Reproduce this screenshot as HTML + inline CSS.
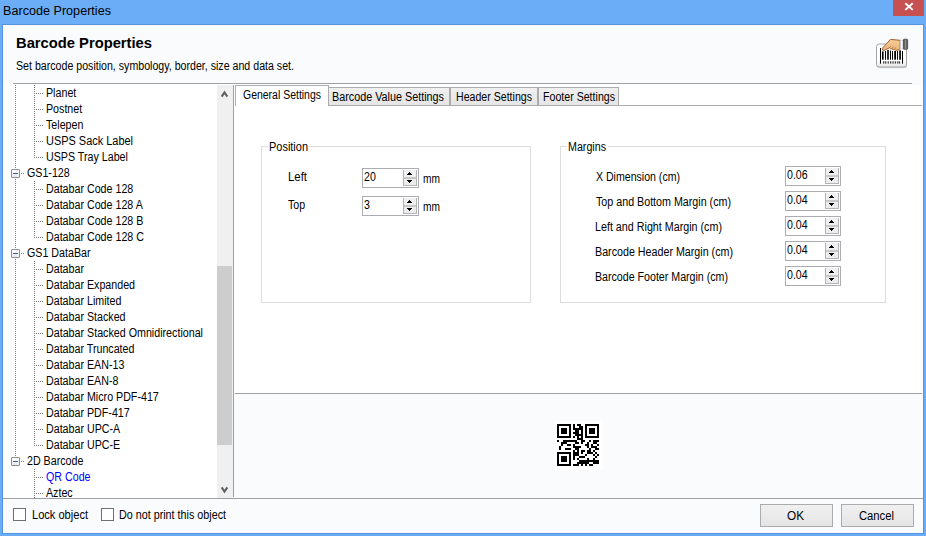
<!DOCTYPE html>
<html><head><meta charset="utf-8"><style>
*{margin:0;padding:0;box-sizing:content-box}
html,body{width:926px;height:536px;overflow:hidden;position:relative;font-family:"Liberation Sans",sans-serif}
.t{position:absolute;white-space:nowrap;font-family:"Liberation Sans",sans-serif;transform-origin:0 0}
.ebox{position:absolute;width:7px;height:7px;border:1px solid #8e8f8f;border-radius:1px;background:linear-gradient(#fff,#e8e8e8)}
.ebox i{position:absolute;left:1px;top:3px;width:5px;height:1px;background:#3c5aa0}
.num{position:absolute;border:1px solid #abadb3;background:#fff}
.sb{position:absolute;width:14px;border:0;background:linear-gradient(#f2f2f2,#e3e3e3);box-shadow:inset 0 0 0 1px #d9d9d9}
.cb{position:absolute;width:11px;height:11px;border:1px solid #707070;background:#fff}
.btn{position:absolute;border:1px solid #acacac;background:linear-gradient(#f0f0f0,#e5e5e5)}
</style></head>
<body>
<div style="position:absolute;left:0px;top:0px;width:926px;height:536px;background:#6badf6"></div>
<div class="t" style="left:3px;top:4px;font-size:12.5px;font-weight:400;color:#000;line-height:15px;transform:scaleX(1.0092);">Barcode Properties</div>
<div style="position:absolute;left:893px;top:0px;width:31px;height:16px;background:#c75050;"></div>
<svg style="position:absolute;left:904px;top:2px" width="10" height="10" viewBox="0 0 10 10"><path d="M1.3 1.2 L8.7 7.9 M8.7 1.2 L1.3 7.9" stroke="#fff" stroke-width="1.9"/></svg>
<div style="position:absolute;left:2px;top:24px;width:920px;height:508px;background:#fafbfd;border:1px solid #5593dc"></div>
<div class="t" style="left:16px;top:35px;font-size:14px;font-weight:700;color:#000;line-height:16px;transform:scaleX(1.0529);">Barcode Properties</div>
<div class="t" style="left:16px;top:59px;font-size:12px;font-weight:400;color:#000;line-height:14px;transform:scaleX(0.8854);">Set barcode position, symbology, border, size and data set.</div>
<div style="position:absolute;left:13px;top:83px;width:899px;height:1px;background:#a0a0a0"></div>
<div style="position:absolute;left:3px;top:84px;width:214px;height:414px;background:#fff"></div>
<div style="position:absolute;left:3px;top:84px;width:10px;height:1px;background:#fafbfd"></div>
<div style="position:absolute;left:217px;top:84px;width:16px;height:1px;background:#fff"></div>
<svg style="position:absolute;left:3px;top:84px" width="214" height="414" shape-rendering="crispEdges"><rect x="12" y="1" width="1" height="1" fill="#7c7c7c"/><rect x="12" y="3" width="1" height="1" fill="#7c7c7c"/><rect x="12" y="5" width="1" height="1" fill="#7c7c7c"/><rect x="12" y="7" width="1" height="1" fill="#7c7c7c"/><rect x="12" y="9" width="1" height="1" fill="#7c7c7c"/><rect x="12" y="11" width="1" height="1" fill="#7c7c7c"/><rect x="12" y="13" width="1" height="1" fill="#7c7c7c"/><rect x="12" y="15" width="1" height="1" fill="#7c7c7c"/><rect x="12" y="17" width="1" height="1" fill="#7c7c7c"/><rect x="12" y="19" width="1" height="1" fill="#7c7c7c"/><rect x="12" y="21" width="1" height="1" fill="#7c7c7c"/><rect x="12" y="23" width="1" height="1" fill="#7c7c7c"/><rect x="12" y="25" width="1" height="1" fill="#7c7c7c"/><rect x="12" y="27" width="1" height="1" fill="#7c7c7c"/><rect x="12" y="29" width="1" height="1" fill="#7c7c7c"/><rect x="12" y="31" width="1" height="1" fill="#7c7c7c"/><rect x="12" y="33" width="1" height="1" fill="#7c7c7c"/><rect x="12" y="35" width="1" height="1" fill="#7c7c7c"/><rect x="12" y="37" width="1" height="1" fill="#7c7c7c"/><rect x="12" y="39" width="1" height="1" fill="#7c7c7c"/><rect x="12" y="41" width="1" height="1" fill="#7c7c7c"/><rect x="12" y="43" width="1" height="1" fill="#7c7c7c"/><rect x="12" y="45" width="1" height="1" fill="#7c7c7c"/><rect x="12" y="47" width="1" height="1" fill="#7c7c7c"/><rect x="12" y="49" width="1" height="1" fill="#7c7c7c"/><rect x="12" y="51" width="1" height="1" fill="#7c7c7c"/><rect x="12" y="53" width="1" height="1" fill="#7c7c7c"/><rect x="12" y="55" width="1" height="1" fill="#7c7c7c"/><rect x="12" y="57" width="1" height="1" fill="#7c7c7c"/><rect x="12" y="59" width="1" height="1" fill="#7c7c7c"/><rect x="12" y="61" width="1" height="1" fill="#7c7c7c"/><rect x="12" y="63" width="1" height="1" fill="#7c7c7c"/><rect x="12" y="65" width="1" height="1" fill="#7c7c7c"/><rect x="12" y="67" width="1" height="1" fill="#7c7c7c"/><rect x="12" y="69" width="1" height="1" fill="#7c7c7c"/><rect x="12" y="71" width="1" height="1" fill="#7c7c7c"/><rect x="12" y="73" width="1" height="1" fill="#7c7c7c"/><rect x="12" y="75" width="1" height="1" fill="#7c7c7c"/><rect x="12" y="77" width="1" height="1" fill="#7c7c7c"/><rect x="12" y="79" width="1" height="1" fill="#7c7c7c"/><rect x="12" y="81" width="1" height="1" fill="#7c7c7c"/><rect x="12" y="83" width="1" height="1" fill="#7c7c7c"/><rect x="12" y="95" width="1" height="1" fill="#7c7c7c"/><rect x="12" y="97" width="1" height="1" fill="#7c7c7c"/><rect x="12" y="99" width="1" height="1" fill="#7c7c7c"/><rect x="12" y="101" width="1" height="1" fill="#7c7c7c"/><rect x="12" y="103" width="1" height="1" fill="#7c7c7c"/><rect x="12" y="105" width="1" height="1" fill="#7c7c7c"/><rect x="12" y="107" width="1" height="1" fill="#7c7c7c"/><rect x="12" y="109" width="1" height="1" fill="#7c7c7c"/><rect x="12" y="111" width="1" height="1" fill="#7c7c7c"/><rect x="12" y="113" width="1" height="1" fill="#7c7c7c"/><rect x="12" y="115" width="1" height="1" fill="#7c7c7c"/><rect x="12" y="117" width="1" height="1" fill="#7c7c7c"/><rect x="12" y="119" width="1" height="1" fill="#7c7c7c"/><rect x="12" y="121" width="1" height="1" fill="#7c7c7c"/><rect x="12" y="123" width="1" height="1" fill="#7c7c7c"/><rect x="12" y="125" width="1" height="1" fill="#7c7c7c"/><rect x="12" y="127" width="1" height="1" fill="#7c7c7c"/><rect x="12" y="129" width="1" height="1" fill="#7c7c7c"/><rect x="12" y="131" width="1" height="1" fill="#7c7c7c"/><rect x="12" y="133" width="1" height="1" fill="#7c7c7c"/><rect x="12" y="135" width="1" height="1" fill="#7c7c7c"/><rect x="12" y="137" width="1" height="1" fill="#7c7c7c"/><rect x="12" y="139" width="1" height="1" fill="#7c7c7c"/><rect x="12" y="141" width="1" height="1" fill="#7c7c7c"/><rect x="12" y="143" width="1" height="1" fill="#7c7c7c"/><rect x="12" y="145" width="1" height="1" fill="#7c7c7c"/><rect x="12" y="147" width="1" height="1" fill="#7c7c7c"/><rect x="12" y="149" width="1" height="1" fill="#7c7c7c"/><rect x="12" y="151" width="1" height="1" fill="#7c7c7c"/><rect x="12" y="153" width="1" height="1" fill="#7c7c7c"/><rect x="12" y="155" width="1" height="1" fill="#7c7c7c"/><rect x="12" y="157" width="1" height="1" fill="#7c7c7c"/><rect x="12" y="159" width="1" height="1" fill="#7c7c7c"/><rect x="12" y="161" width="1" height="1" fill="#7c7c7c"/><rect x="12" y="163" width="1" height="1" fill="#7c7c7c"/><rect x="12" y="175" width="1" height="1" fill="#7c7c7c"/><rect x="12" y="177" width="1" height="1" fill="#7c7c7c"/><rect x="12" y="179" width="1" height="1" fill="#7c7c7c"/><rect x="12" y="181" width="1" height="1" fill="#7c7c7c"/><rect x="12" y="183" width="1" height="1" fill="#7c7c7c"/><rect x="12" y="185" width="1" height="1" fill="#7c7c7c"/><rect x="12" y="187" width="1" height="1" fill="#7c7c7c"/><rect x="12" y="189" width="1" height="1" fill="#7c7c7c"/><rect x="12" y="191" width="1" height="1" fill="#7c7c7c"/><rect x="12" y="193" width="1" height="1" fill="#7c7c7c"/><rect x="12" y="195" width="1" height="1" fill="#7c7c7c"/><rect x="12" y="197" width="1" height="1" fill="#7c7c7c"/><rect x="12" y="199" width="1" height="1" fill="#7c7c7c"/><rect x="12" y="201" width="1" height="1" fill="#7c7c7c"/><rect x="12" y="203" width="1" height="1" fill="#7c7c7c"/><rect x="12" y="205" width="1" height="1" fill="#7c7c7c"/><rect x="12" y="207" width="1" height="1" fill="#7c7c7c"/><rect x="12" y="209" width="1" height="1" fill="#7c7c7c"/><rect x="12" y="211" width="1" height="1" fill="#7c7c7c"/><rect x="12" y="213" width="1" height="1" fill="#7c7c7c"/><rect x="12" y="215" width="1" height="1" fill="#7c7c7c"/><rect x="12" y="217" width="1" height="1" fill="#7c7c7c"/><rect x="12" y="219" width="1" height="1" fill="#7c7c7c"/><rect x="12" y="221" width="1" height="1" fill="#7c7c7c"/><rect x="12" y="223" width="1" height="1" fill="#7c7c7c"/><rect x="12" y="225" width="1" height="1" fill="#7c7c7c"/><rect x="12" y="227" width="1" height="1" fill="#7c7c7c"/><rect x="12" y="229" width="1" height="1" fill="#7c7c7c"/><rect x="12" y="231" width="1" height="1" fill="#7c7c7c"/><rect x="12" y="233" width="1" height="1" fill="#7c7c7c"/><rect x="12" y="235" width="1" height="1" fill="#7c7c7c"/><rect x="12" y="237" width="1" height="1" fill="#7c7c7c"/><rect x="12" y="239" width="1" height="1" fill="#7c7c7c"/><rect x="12" y="241" width="1" height="1" fill="#7c7c7c"/><rect x="12" y="243" width="1" height="1" fill="#7c7c7c"/><rect x="12" y="245" width="1" height="1" fill="#7c7c7c"/><rect x="12" y="247" width="1" height="1" fill="#7c7c7c"/><rect x="12" y="249" width="1" height="1" fill="#7c7c7c"/><rect x="12" y="251" width="1" height="1" fill="#7c7c7c"/><rect x="12" y="253" width="1" height="1" fill="#7c7c7c"/><rect x="12" y="255" width="1" height="1" fill="#7c7c7c"/><rect x="12" y="257" width="1" height="1" fill="#7c7c7c"/><rect x="12" y="259" width="1" height="1" fill="#7c7c7c"/><rect x="12" y="261" width="1" height="1" fill="#7c7c7c"/><rect x="12" y="263" width="1" height="1" fill="#7c7c7c"/><rect x="12" y="265" width="1" height="1" fill="#7c7c7c"/><rect x="12" y="267" width="1" height="1" fill="#7c7c7c"/><rect x="12" y="269" width="1" height="1" fill="#7c7c7c"/><rect x="12" y="271" width="1" height="1" fill="#7c7c7c"/><rect x="12" y="273" width="1" height="1" fill="#7c7c7c"/><rect x="12" y="275" width="1" height="1" fill="#7c7c7c"/><rect x="12" y="277" width="1" height="1" fill="#7c7c7c"/><rect x="12" y="279" width="1" height="1" fill="#7c7c7c"/><rect x="12" y="281" width="1" height="1" fill="#7c7c7c"/><rect x="12" y="283" width="1" height="1" fill="#7c7c7c"/><rect x="12" y="285" width="1" height="1" fill="#7c7c7c"/><rect x="12" y="287" width="1" height="1" fill="#7c7c7c"/><rect x="12" y="289" width="1" height="1" fill="#7c7c7c"/><rect x="12" y="291" width="1" height="1" fill="#7c7c7c"/><rect x="12" y="293" width="1" height="1" fill="#7c7c7c"/><rect x="12" y="295" width="1" height="1" fill="#7c7c7c"/><rect x="12" y="297" width="1" height="1" fill="#7c7c7c"/><rect x="12" y="299" width="1" height="1" fill="#7c7c7c"/><rect x="12" y="301" width="1" height="1" fill="#7c7c7c"/><rect x="12" y="303" width="1" height="1" fill="#7c7c7c"/><rect x="12" y="305" width="1" height="1" fill="#7c7c7c"/><rect x="12" y="307" width="1" height="1" fill="#7c7c7c"/><rect x="12" y="309" width="1" height="1" fill="#7c7c7c"/><rect x="12" y="311" width="1" height="1" fill="#7c7c7c"/><rect x="12" y="313" width="1" height="1" fill="#7c7c7c"/><rect x="12" y="315" width="1" height="1" fill="#7c7c7c"/><rect x="12" y="317" width="1" height="1" fill="#7c7c7c"/><rect x="12" y="319" width="1" height="1" fill="#7c7c7c"/><rect x="12" y="321" width="1" height="1" fill="#7c7c7c"/><rect x="12" y="323" width="1" height="1" fill="#7c7c7c"/><rect x="12" y="325" width="1" height="1" fill="#7c7c7c"/><rect x="12" y="327" width="1" height="1" fill="#7c7c7c"/><rect x="12" y="329" width="1" height="1" fill="#7c7c7c"/><rect x="12" y="331" width="1" height="1" fill="#7c7c7c"/><rect x="12" y="333" width="1" height="1" fill="#7c7c7c"/><rect x="12" y="335" width="1" height="1" fill="#7c7c7c"/><rect x="12" y="337" width="1" height="1" fill="#7c7c7c"/><rect x="12" y="339" width="1" height="1" fill="#7c7c7c"/><rect x="12" y="341" width="1" height="1" fill="#7c7c7c"/><rect x="12" y="343" width="1" height="1" fill="#7c7c7c"/><rect x="12" y="345" width="1" height="1" fill="#7c7c7c"/><rect x="12" y="347" width="1" height="1" fill="#7c7c7c"/><rect x="12" y="349" width="1" height="1" fill="#7c7c7c"/><rect x="12" y="351" width="1" height="1" fill="#7c7c7c"/><rect x="12" y="353" width="1" height="1" fill="#7c7c7c"/><rect x="12" y="355" width="1" height="1" fill="#7c7c7c"/><rect x="12" y="357" width="1" height="1" fill="#7c7c7c"/><rect x="12" y="359" width="1" height="1" fill="#7c7c7c"/><rect x="12" y="361" width="1" height="1" fill="#7c7c7c"/><rect x="12" y="363" width="1" height="1" fill="#7c7c7c"/><rect x="12" y="365" width="1" height="1" fill="#7c7c7c"/><rect x="12" y="367" width="1" height="1" fill="#7c7c7c"/><rect x="12" y="369" width="1" height="1" fill="#7c7c7c"/><rect x="12" y="371" width="1" height="1" fill="#7c7c7c"/><rect x="31" y="1" width="1" height="1" fill="#7c7c7c"/><rect x="31" y="3" width="1" height="1" fill="#7c7c7c"/><rect x="31" y="5" width="1" height="1" fill="#7c7c7c"/><rect x="31" y="7" width="1" height="1" fill="#7c7c7c"/><rect x="31" y="9" width="1" height="1" fill="#7c7c7c"/><rect x="31" y="11" width="1" height="1" fill="#7c7c7c"/><rect x="31" y="13" width="1" height="1" fill="#7c7c7c"/><rect x="31" y="15" width="1" height="1" fill="#7c7c7c"/><rect x="31" y="17" width="1" height="1" fill="#7c7c7c"/><rect x="31" y="19" width="1" height="1" fill="#7c7c7c"/><rect x="31" y="21" width="1" height="1" fill="#7c7c7c"/><rect x="31" y="23" width="1" height="1" fill="#7c7c7c"/><rect x="31" y="25" width="1" height="1" fill="#7c7c7c"/><rect x="31" y="27" width="1" height="1" fill="#7c7c7c"/><rect x="31" y="29" width="1" height="1" fill="#7c7c7c"/><rect x="31" y="31" width="1" height="1" fill="#7c7c7c"/><rect x="31" y="33" width="1" height="1" fill="#7c7c7c"/><rect x="31" y="35" width="1" height="1" fill="#7c7c7c"/><rect x="31" y="37" width="1" height="1" fill="#7c7c7c"/><rect x="31" y="39" width="1" height="1" fill="#7c7c7c"/><rect x="31" y="41" width="1" height="1" fill="#7c7c7c"/><rect x="31" y="43" width="1" height="1" fill="#7c7c7c"/><rect x="31" y="45" width="1" height="1" fill="#7c7c7c"/><rect x="31" y="47" width="1" height="1" fill="#7c7c7c"/><rect x="31" y="49" width="1" height="1" fill="#7c7c7c"/><rect x="31" y="51" width="1" height="1" fill="#7c7c7c"/><rect x="31" y="53" width="1" height="1" fill="#7c7c7c"/><rect x="31" y="55" width="1" height="1" fill="#7c7c7c"/><rect x="31" y="57" width="1" height="1" fill="#7c7c7c"/><rect x="31" y="59" width="1" height="1" fill="#7c7c7c"/><rect x="31" y="61" width="1" height="1" fill="#7c7c7c"/><rect x="31" y="63" width="1" height="1" fill="#7c7c7c"/><rect x="31" y="65" width="1" height="1" fill="#7c7c7c"/><rect x="31" y="67" width="1" height="1" fill="#7c7c7c"/><rect x="31" y="69" width="1" height="1" fill="#7c7c7c"/><rect x="31" y="71" width="1" height="1" fill="#7c7c7c"/><rect x="31" y="73" width="1" height="1" fill="#7c7c7c"/><rect x="31" y="97" width="1" height="1" fill="#7c7c7c"/><rect x="31" y="99" width="1" height="1" fill="#7c7c7c"/><rect x="31" y="101" width="1" height="1" fill="#7c7c7c"/><rect x="31" y="103" width="1" height="1" fill="#7c7c7c"/><rect x="31" y="105" width="1" height="1" fill="#7c7c7c"/><rect x="31" y="107" width="1" height="1" fill="#7c7c7c"/><rect x="31" y="109" width="1" height="1" fill="#7c7c7c"/><rect x="31" y="111" width="1" height="1" fill="#7c7c7c"/><rect x="31" y="113" width="1" height="1" fill="#7c7c7c"/><rect x="31" y="115" width="1" height="1" fill="#7c7c7c"/><rect x="31" y="117" width="1" height="1" fill="#7c7c7c"/><rect x="31" y="119" width="1" height="1" fill="#7c7c7c"/><rect x="31" y="121" width="1" height="1" fill="#7c7c7c"/><rect x="31" y="123" width="1" height="1" fill="#7c7c7c"/><rect x="31" y="125" width="1" height="1" fill="#7c7c7c"/><rect x="31" y="127" width="1" height="1" fill="#7c7c7c"/><rect x="31" y="129" width="1" height="1" fill="#7c7c7c"/><rect x="31" y="131" width="1" height="1" fill="#7c7c7c"/><rect x="31" y="133" width="1" height="1" fill="#7c7c7c"/><rect x="31" y="135" width="1" height="1" fill="#7c7c7c"/><rect x="31" y="137" width="1" height="1" fill="#7c7c7c"/><rect x="31" y="139" width="1" height="1" fill="#7c7c7c"/><rect x="31" y="141" width="1" height="1" fill="#7c7c7c"/><rect x="31" y="143" width="1" height="1" fill="#7c7c7c"/><rect x="31" y="145" width="1" height="1" fill="#7c7c7c"/><rect x="31" y="147" width="1" height="1" fill="#7c7c7c"/><rect x="31" y="149" width="1" height="1" fill="#7c7c7c"/><rect x="31" y="151" width="1" height="1" fill="#7c7c7c"/><rect x="31" y="153" width="1" height="1" fill="#7c7c7c"/><rect x="31" y="177" width="1" height="1" fill="#7c7c7c"/><rect x="31" y="179" width="1" height="1" fill="#7c7c7c"/><rect x="31" y="181" width="1" height="1" fill="#7c7c7c"/><rect x="31" y="183" width="1" height="1" fill="#7c7c7c"/><rect x="31" y="185" width="1" height="1" fill="#7c7c7c"/><rect x="31" y="187" width="1" height="1" fill="#7c7c7c"/><rect x="31" y="189" width="1" height="1" fill="#7c7c7c"/><rect x="31" y="191" width="1" height="1" fill="#7c7c7c"/><rect x="31" y="193" width="1" height="1" fill="#7c7c7c"/><rect x="31" y="195" width="1" height="1" fill="#7c7c7c"/><rect x="31" y="197" width="1" height="1" fill="#7c7c7c"/><rect x="31" y="199" width="1" height="1" fill="#7c7c7c"/><rect x="31" y="201" width="1" height="1" fill="#7c7c7c"/><rect x="31" y="203" width="1" height="1" fill="#7c7c7c"/><rect x="31" y="205" width="1" height="1" fill="#7c7c7c"/><rect x="31" y="207" width="1" height="1" fill="#7c7c7c"/><rect x="31" y="209" width="1" height="1" fill="#7c7c7c"/><rect x="31" y="211" width="1" height="1" fill="#7c7c7c"/><rect x="31" y="213" width="1" height="1" fill="#7c7c7c"/><rect x="31" y="215" width="1" height="1" fill="#7c7c7c"/><rect x="31" y="217" width="1" height="1" fill="#7c7c7c"/><rect x="31" y="219" width="1" height="1" fill="#7c7c7c"/><rect x="31" y="221" width="1" height="1" fill="#7c7c7c"/><rect x="31" y="223" width="1" height="1" fill="#7c7c7c"/><rect x="31" y="225" width="1" height="1" fill="#7c7c7c"/><rect x="31" y="227" width="1" height="1" fill="#7c7c7c"/><rect x="31" y="229" width="1" height="1" fill="#7c7c7c"/><rect x="31" y="231" width="1" height="1" fill="#7c7c7c"/><rect x="31" y="233" width="1" height="1" fill="#7c7c7c"/><rect x="31" y="235" width="1" height="1" fill="#7c7c7c"/><rect x="31" y="237" width="1" height="1" fill="#7c7c7c"/><rect x="31" y="239" width="1" height="1" fill="#7c7c7c"/><rect x="31" y="241" width="1" height="1" fill="#7c7c7c"/><rect x="31" y="243" width="1" height="1" fill="#7c7c7c"/><rect x="31" y="245" width="1" height="1" fill="#7c7c7c"/><rect x="31" y="247" width="1" height="1" fill="#7c7c7c"/><rect x="31" y="249" width="1" height="1" fill="#7c7c7c"/><rect x="31" y="251" width="1" height="1" fill="#7c7c7c"/><rect x="31" y="253" width="1" height="1" fill="#7c7c7c"/><rect x="31" y="255" width="1" height="1" fill="#7c7c7c"/><rect x="31" y="257" width="1" height="1" fill="#7c7c7c"/><rect x="31" y="259" width="1" height="1" fill="#7c7c7c"/><rect x="31" y="261" width="1" height="1" fill="#7c7c7c"/><rect x="31" y="263" width="1" height="1" fill="#7c7c7c"/><rect x="31" y="265" width="1" height="1" fill="#7c7c7c"/><rect x="31" y="267" width="1" height="1" fill="#7c7c7c"/><rect x="31" y="269" width="1" height="1" fill="#7c7c7c"/><rect x="31" y="271" width="1" height="1" fill="#7c7c7c"/><rect x="31" y="273" width="1" height="1" fill="#7c7c7c"/><rect x="31" y="275" width="1" height="1" fill="#7c7c7c"/><rect x="31" y="277" width="1" height="1" fill="#7c7c7c"/><rect x="31" y="279" width="1" height="1" fill="#7c7c7c"/><rect x="31" y="281" width="1" height="1" fill="#7c7c7c"/><rect x="31" y="283" width="1" height="1" fill="#7c7c7c"/><rect x="31" y="285" width="1" height="1" fill="#7c7c7c"/><rect x="31" y="287" width="1" height="1" fill="#7c7c7c"/><rect x="31" y="289" width="1" height="1" fill="#7c7c7c"/><rect x="31" y="291" width="1" height="1" fill="#7c7c7c"/><rect x="31" y="293" width="1" height="1" fill="#7c7c7c"/><rect x="31" y="295" width="1" height="1" fill="#7c7c7c"/><rect x="31" y="297" width="1" height="1" fill="#7c7c7c"/><rect x="31" y="299" width="1" height="1" fill="#7c7c7c"/><rect x="31" y="301" width="1" height="1" fill="#7c7c7c"/><rect x="31" y="303" width="1" height="1" fill="#7c7c7c"/><rect x="31" y="305" width="1" height="1" fill="#7c7c7c"/><rect x="31" y="307" width="1" height="1" fill="#7c7c7c"/><rect x="31" y="309" width="1" height="1" fill="#7c7c7c"/><rect x="31" y="311" width="1" height="1" fill="#7c7c7c"/><rect x="31" y="313" width="1" height="1" fill="#7c7c7c"/><rect x="31" y="315" width="1" height="1" fill="#7c7c7c"/><rect x="31" y="317" width="1" height="1" fill="#7c7c7c"/><rect x="31" y="319" width="1" height="1" fill="#7c7c7c"/><rect x="31" y="321" width="1" height="1" fill="#7c7c7c"/><rect x="31" y="323" width="1" height="1" fill="#7c7c7c"/><rect x="31" y="325" width="1" height="1" fill="#7c7c7c"/><rect x="31" y="327" width="1" height="1" fill="#7c7c7c"/><rect x="31" y="329" width="1" height="1" fill="#7c7c7c"/><rect x="31" y="331" width="1" height="1" fill="#7c7c7c"/><rect x="31" y="333" width="1" height="1" fill="#7c7c7c"/><rect x="31" y="335" width="1" height="1" fill="#7c7c7c"/><rect x="31" y="337" width="1" height="1" fill="#7c7c7c"/><rect x="31" y="339" width="1" height="1" fill="#7c7c7c"/><rect x="31" y="341" width="1" height="1" fill="#7c7c7c"/><rect x="31" y="343" width="1" height="1" fill="#7c7c7c"/><rect x="31" y="345" width="1" height="1" fill="#7c7c7c"/><rect x="31" y="347" width="1" height="1" fill="#7c7c7c"/><rect x="31" y="349" width="1" height="1" fill="#7c7c7c"/><rect x="31" y="351" width="1" height="1" fill="#7c7c7c"/><rect x="31" y="353" width="1" height="1" fill="#7c7c7c"/><rect x="31" y="355" width="1" height="1" fill="#7c7c7c"/><rect x="31" y="357" width="1" height="1" fill="#7c7c7c"/><rect x="31" y="359" width="1" height="1" fill="#7c7c7c"/><rect x="31" y="361" width="1" height="1" fill="#7c7c7c"/><rect x="31" y="385" width="1" height="1" fill="#7c7c7c"/><rect x="31" y="387" width="1" height="1" fill="#7c7c7c"/><rect x="31" y="389" width="1" height="1" fill="#7c7c7c"/><rect x="31" y="391" width="1" height="1" fill="#7c7c7c"/><rect x="31" y="393" width="1" height="1" fill="#7c7c7c"/><rect x="31" y="395" width="1" height="1" fill="#7c7c7c"/><rect x="31" y="397" width="1" height="1" fill="#7c7c7c"/><rect x="31" y="399" width="1" height="1" fill="#7c7c7c"/><rect x="31" y="401" width="1" height="1" fill="#7c7c7c"/><rect x="31" y="403" width="1" height="1" fill="#7c7c7c"/><rect x="31" y="405" width="1" height="1" fill="#7c7c7c"/><rect x="31" y="407" width="1" height="1" fill="#7c7c7c"/><rect x="31" y="409" width="1" height="1" fill="#7c7c7c"/><rect x="31" y="411" width="1" height="1" fill="#7c7c7c"/><rect x="31" y="413" width="1" height="1" fill="#7c7c7c"/><rect x="33" y="9" width="1" height="1" fill="#7c7c7c"/><rect x="35" y="9" width="1" height="1" fill="#7c7c7c"/><rect x="37" y="9" width="1" height="1" fill="#7c7c7c"/><rect x="39" y="9" width="1" height="1" fill="#7c7c7c"/><rect x="33" y="25" width="1" height="1" fill="#7c7c7c"/><rect x="35" y="25" width="1" height="1" fill="#7c7c7c"/><rect x="37" y="25" width="1" height="1" fill="#7c7c7c"/><rect x="39" y="25" width="1" height="1" fill="#7c7c7c"/><rect x="33" y="41" width="1" height="1" fill="#7c7c7c"/><rect x="35" y="41" width="1" height="1" fill="#7c7c7c"/><rect x="37" y="41" width="1" height="1" fill="#7c7c7c"/><rect x="39" y="41" width="1" height="1" fill="#7c7c7c"/><rect x="33" y="57" width="1" height="1" fill="#7c7c7c"/><rect x="35" y="57" width="1" height="1" fill="#7c7c7c"/><rect x="37" y="57" width="1" height="1" fill="#7c7c7c"/><rect x="39" y="57" width="1" height="1" fill="#7c7c7c"/><rect x="33" y="73" width="1" height="1" fill="#7c7c7c"/><rect x="35" y="73" width="1" height="1" fill="#7c7c7c"/><rect x="37" y="73" width="1" height="1" fill="#7c7c7c"/><rect x="39" y="73" width="1" height="1" fill="#7c7c7c"/><rect x="18" y="89" width="1" height="1" fill="#7c7c7c"/><rect x="20" y="89" width="1" height="1" fill="#7c7c7c"/><rect x="33" y="105" width="1" height="1" fill="#7c7c7c"/><rect x="35" y="105" width="1" height="1" fill="#7c7c7c"/><rect x="37" y="105" width="1" height="1" fill="#7c7c7c"/><rect x="39" y="105" width="1" height="1" fill="#7c7c7c"/><rect x="33" y="121" width="1" height="1" fill="#7c7c7c"/><rect x="35" y="121" width="1" height="1" fill="#7c7c7c"/><rect x="37" y="121" width="1" height="1" fill="#7c7c7c"/><rect x="39" y="121" width="1" height="1" fill="#7c7c7c"/><rect x="33" y="137" width="1" height="1" fill="#7c7c7c"/><rect x="35" y="137" width="1" height="1" fill="#7c7c7c"/><rect x="37" y="137" width="1" height="1" fill="#7c7c7c"/><rect x="39" y="137" width="1" height="1" fill="#7c7c7c"/><rect x="33" y="153" width="1" height="1" fill="#7c7c7c"/><rect x="35" y="153" width="1" height="1" fill="#7c7c7c"/><rect x="37" y="153" width="1" height="1" fill="#7c7c7c"/><rect x="39" y="153" width="1" height="1" fill="#7c7c7c"/><rect x="18" y="169" width="1" height="1" fill="#7c7c7c"/><rect x="20" y="169" width="1" height="1" fill="#7c7c7c"/><rect x="33" y="185" width="1" height="1" fill="#7c7c7c"/><rect x="35" y="185" width="1" height="1" fill="#7c7c7c"/><rect x="37" y="185" width="1" height="1" fill="#7c7c7c"/><rect x="39" y="185" width="1" height="1" fill="#7c7c7c"/><rect x="33" y="201" width="1" height="1" fill="#7c7c7c"/><rect x="35" y="201" width="1" height="1" fill="#7c7c7c"/><rect x="37" y="201" width="1" height="1" fill="#7c7c7c"/><rect x="39" y="201" width="1" height="1" fill="#7c7c7c"/><rect x="33" y="217" width="1" height="1" fill="#7c7c7c"/><rect x="35" y="217" width="1" height="1" fill="#7c7c7c"/><rect x="37" y="217" width="1" height="1" fill="#7c7c7c"/><rect x="39" y="217" width="1" height="1" fill="#7c7c7c"/><rect x="33" y="233" width="1" height="1" fill="#7c7c7c"/><rect x="35" y="233" width="1" height="1" fill="#7c7c7c"/><rect x="37" y="233" width="1" height="1" fill="#7c7c7c"/><rect x="39" y="233" width="1" height="1" fill="#7c7c7c"/><rect x="33" y="249" width="1" height="1" fill="#7c7c7c"/><rect x="35" y="249" width="1" height="1" fill="#7c7c7c"/><rect x="37" y="249" width="1" height="1" fill="#7c7c7c"/><rect x="39" y="249" width="1" height="1" fill="#7c7c7c"/><rect x="33" y="265" width="1" height="1" fill="#7c7c7c"/><rect x="35" y="265" width="1" height="1" fill="#7c7c7c"/><rect x="37" y="265" width="1" height="1" fill="#7c7c7c"/><rect x="39" y="265" width="1" height="1" fill="#7c7c7c"/><rect x="33" y="281" width="1" height="1" fill="#7c7c7c"/><rect x="35" y="281" width="1" height="1" fill="#7c7c7c"/><rect x="37" y="281" width="1" height="1" fill="#7c7c7c"/><rect x="39" y="281" width="1" height="1" fill="#7c7c7c"/><rect x="33" y="297" width="1" height="1" fill="#7c7c7c"/><rect x="35" y="297" width="1" height="1" fill="#7c7c7c"/><rect x="37" y="297" width="1" height="1" fill="#7c7c7c"/><rect x="39" y="297" width="1" height="1" fill="#7c7c7c"/><rect x="33" y="313" width="1" height="1" fill="#7c7c7c"/><rect x="35" y="313" width="1" height="1" fill="#7c7c7c"/><rect x="37" y="313" width="1" height="1" fill="#7c7c7c"/><rect x="39" y="313" width="1" height="1" fill="#7c7c7c"/><rect x="33" y="329" width="1" height="1" fill="#7c7c7c"/><rect x="35" y="329" width="1" height="1" fill="#7c7c7c"/><rect x="37" y="329" width="1" height="1" fill="#7c7c7c"/><rect x="39" y="329" width="1" height="1" fill="#7c7c7c"/><rect x="33" y="345" width="1" height="1" fill="#7c7c7c"/><rect x="35" y="345" width="1" height="1" fill="#7c7c7c"/><rect x="37" y="345" width="1" height="1" fill="#7c7c7c"/><rect x="39" y="345" width="1" height="1" fill="#7c7c7c"/><rect x="33" y="361" width="1" height="1" fill="#7c7c7c"/><rect x="35" y="361" width="1" height="1" fill="#7c7c7c"/><rect x="37" y="361" width="1" height="1" fill="#7c7c7c"/><rect x="39" y="361" width="1" height="1" fill="#7c7c7c"/><rect x="18" y="377" width="1" height="1" fill="#7c7c7c"/><rect x="20" y="377" width="1" height="1" fill="#7c7c7c"/><rect x="33" y="393" width="1" height="1" fill="#7c7c7c"/><rect x="35" y="393" width="1" height="1" fill="#7c7c7c"/><rect x="37" y="393" width="1" height="1" fill="#7c7c7c"/><rect x="39" y="393" width="1" height="1" fill="#7c7c7c"/><rect x="33" y="409" width="1" height="1" fill="#7c7c7c"/><rect x="35" y="409" width="1" height="1" fill="#7c7c7c"/><rect x="37" y="409" width="1" height="1" fill="#7c7c7c"/><rect x="39" y="409" width="1" height="1" fill="#7c7c7c"/></svg>
<div style="position:absolute;left:3px;top:84px;width:214px;height:414px;overflow:hidden">
<div class="t" style="left:43px;top:2px;font-size:12px;font-weight:400;color:#000;line-height:14px;transform:scaleX(0.8900);">Planet</div>
<div class="t" style="left:43px;top:18px;font-size:12px;font-weight:400;color:#000;line-height:14px;transform:scaleX(0.8900);">Postnet</div>
<div class="t" style="left:43px;top:34px;font-size:12px;font-weight:400;color:#000;line-height:14px;transform:scaleX(0.8900);">Telepen</div>
<div class="t" style="left:43px;top:50px;font-size:12px;font-weight:400;color:#000;line-height:14px;transform:scaleX(0.9120);">USPS Sack Label</div>
<div class="t" style="left:43px;top:66px;font-size:12px;font-weight:400;color:#000;line-height:14px;transform:scaleX(0.8900);">USPS Tray Label</div>
<div class="ebox" style="left:8px;top:85px"><i></i></div>
<div class="t" style="left:24px;top:82px;font-size:12px;font-weight:400;color:#000;line-height:14px;transform:scaleX(0.8900);">GS1-128</div>
<div class="t" style="left:43px;top:98px;font-size:12px;font-weight:400;color:#000;line-height:14px;transform:scaleX(0.8900);">Databar Code 128</div>
<div class="t" style="left:43px;top:114px;font-size:12px;font-weight:400;color:#000;line-height:14px;transform:scaleX(0.8900);">Databar Code 128 A</div>
<div class="t" style="left:43px;top:130px;font-size:12px;font-weight:400;color:#000;line-height:14px;transform:scaleX(0.8900);">Databar Code 128 B</div>
<div class="t" style="left:43px;top:146px;font-size:12px;font-weight:400;color:#000;line-height:14px;transform:scaleX(0.8900);">Databar Code 128 C</div>
<div class="ebox" style="left:8px;top:165px"><i></i></div>
<div class="t" style="left:24px;top:162px;font-size:12px;font-weight:400;color:#000;line-height:14px;transform:scaleX(0.8900);">GS1 DataBar</div>
<div class="t" style="left:43px;top:178px;font-size:12px;font-weight:400;color:#000;line-height:14px;transform:scaleX(0.8900);">Databar</div>
<div class="t" style="left:43px;top:194px;font-size:12px;font-weight:400;color:#000;line-height:14px;transform:scaleX(0.8900);">Databar Expanded</div>
<div class="t" style="left:43px;top:210px;font-size:12px;font-weight:400;color:#000;line-height:14px;transform:scaleX(0.8900);">Databar Limited</div>
<div class="t" style="left:43px;top:226px;font-size:12px;font-weight:400;color:#000;line-height:14px;transform:scaleX(0.8900);">Databar Stacked</div>
<div class="t" style="left:43px;top:242px;font-size:12px;font-weight:400;color:#000;line-height:14px;transform:scaleX(0.8916);">Databar Stacked Omnidirectional</div>
<div class="t" style="left:43px;top:258px;font-size:12px;font-weight:400;color:#000;line-height:14px;transform:scaleX(0.8900);">Databar Truncated</div>
<div class="t" style="left:43px;top:274px;font-size:12px;font-weight:400;color:#000;line-height:14px;transform:scaleX(0.8900);">Databar EAN-13</div>
<div class="t" style="left:43px;top:290px;font-size:12px;font-weight:400;color:#000;line-height:14px;transform:scaleX(0.8900);">Databar EAN-8</div>
<div class="t" style="left:43px;top:306px;font-size:12px;font-weight:400;color:#000;line-height:14px;transform:scaleX(0.8900);">Databar Micro PDF-417</div>
<div class="t" style="left:43px;top:322px;font-size:12px;font-weight:400;color:#000;line-height:14px;transform:scaleX(0.8900);">Databar PDF-417</div>
<div class="t" style="left:43px;top:338px;font-size:12px;font-weight:400;color:#000;line-height:14px;transform:scaleX(0.8900);">Databar UPC-A</div>
<div class="t" style="left:43px;top:354px;font-size:12px;font-weight:400;color:#000;line-height:14px;transform:scaleX(0.8900);">Databar UPC-E</div>
<div class="ebox" style="left:8px;top:373px"><i></i></div>
<div class="t" style="left:24px;top:370px;font-size:12px;font-weight:400;color:#000;line-height:14px;transform:scaleX(0.8900);">2D Barcode</div>
<div class="t" style="left:43px;top:386px;font-size:12px;font-weight:400;color:#0000ff;line-height:14px;transform:scaleX(0.8900);">QR Code</div>
<div class="t" style="left:43px;top:402px;font-size:12px;font-weight:400;color:#000;line-height:14px;transform:scaleX(0.8900);">Aztec</div>
</div>
<div style="position:absolute;left:217px;top:85px;width:16px;height:413px;background:#f0f0f0"></div>
<div style="position:absolute;left:217px;top:266px;width:15px;height:179px;background:#cdcdcd"></div>
<svg style="position:absolute;left:217px;top:84px" width="16" height="16" viewBox="217 84 16 16"><path d="M221.7 96.6 L224.5 92.4 L227.3 96.6" fill="none" stroke="#606060" stroke-width="2"/></svg>
<svg style="position:absolute;left:217px;top:482px" width="16" height="16" viewBox="217 482 16 16"><path d="M221.7 487.4 L224.5 491.6 L227.3 487.4" fill="none" stroke="#606060" stroke-width="2"/></svg>
<div style="position:absolute;left:233px;top:85px;width:1px;height:412px;background:#a0a0a0"></div>
<div style="position:absolute;left:234px;top:84px;width:689px;height:309px;background:#fff"></div>
<div style="position:absolute;left:912px;top:84px;width:11px;height:1px;background:#fafbfd"></div>
<div style="position:absolute;left:328px;top:105px;width:594px;height:1px;background:#acacac"></div>
<div style="position:absolute;left:235px;top:85px;width:92px;height:20px;border:1px solid #acacac;border-bottom:none;background:#fff"></div>
<div class="t" style="left:243px;top:88px;font-size:12px;font-weight:400;color:#000;line-height:14px;transform:scaleX(0.8726);">General Settings</div>
<div style="position:absolute;left:328px;top:87px;width:120px;height:17px;border:1px solid #acacac;border-bottom:none;background:linear-gradient(#f0f0f0,#e5e5e5)"></div>
<div class="t" style="left:332px;top:90px;font-size:12px;font-weight:400;color:#000;line-height:14px;transform:scaleX(0.8994);">Barcode Value Settings</div>
<div style="position:absolute;left:450px;top:87px;width:86px;height:17px;border:1px solid #acacac;border-bottom:none;background:linear-gradient(#f0f0f0,#e5e5e5)"></div>
<div class="t" style="left:456px;top:90px;font-size:12px;font-weight:400;color:#000;line-height:14px;transform:scaleX(0.8831);">Header Settings</div>
<div style="position:absolute;left:538px;top:87px;width:79px;height:17px;border:1px solid #acacac;border-bottom:none;background:linear-gradient(#f0f0f0,#e5e5e5)"></div>
<div class="t" style="left:543px;top:90px;font-size:12px;font-weight:400;color:#000;line-height:14px;transform:scaleX(0.8848);">Footer Settings</div>
<div style="position:absolute;left:261px;top:146px;width:268px;height:155px;border:1px solid #dcdcdc"></div>
<div style="position:absolute;left:268px;top:145px;width:41px;height:3px;background:#fff"></div>
<div class="t" style="left:269px;top:140px;font-size:12px;font-weight:400;color:#000;line-height:14px;transform:scaleX(0.9133);">Position</div>
<div style="position:absolute;left:560px;top:146px;width:324px;height:155px;border:1px solid #dcdcdc"></div>
<div style="position:absolute;left:567px;top:145px;width:41px;height:3px;background:#fff"></div>
<div class="t" style="left:568px;top:140px;font-size:12px;font-weight:400;color:#000;line-height:14px;transform:scaleX(0.8902);">Margins</div>
<div class="t" style="left:288px;top:170px;font-size:12px;font-weight:400;color:#000;line-height:14px;transform:scaleX(0.9493);">Left</div>
<div class="num" style="left:362px;top:168px;width:55px;height:18px"></div>
<div class="t" style="left:364px;top:170px;font-size:12px;font-weight:400;color:#000;line-height:14px;transform:scaleX(0.8850);">20</div>
<svg style="position:absolute;left:403px;top:170px" width="14" height="16" shape-rendering="crispEdges"><rect x="0" y="0" width="14" height="16" fill="#ececec"/><rect x="1" y="0" width="12" height="7" fill="#f0f0f0"/><rect x="0" y="0" width="1" height="16" fill="#b4b4b4"/><rect x="13" y="0" width="1" height="16" fill="#b4b4b4"/><rect x="0" y="15" width="14" height="1" fill="#b4b4b4"/><rect x="1" y="7" width="12" height="2" fill="#c8c8c8"/><rect x="6" y="2" width="1" height="1" fill="#000"/><rect x="5" y="3" width="3" height="1" fill="#000"/><rect x="4" y="4" width="5" height="1" fill="#000"/><rect x="4" y="10" width="5" height="1" fill="#000"/><rect x="5" y="11" width="3" height="1" fill="#000"/><rect x="6" y="12" width="1" height="1" fill="#000"/></svg>
<div class="t" style="left:423px;top:172px;font-size:12px;font-weight:400;color:#000;line-height:14px;transform:scaleX(0.8500);">mm</div>
<div class="t" style="left:288px;top:198px;font-size:12px;font-weight:400;color:#000;line-height:14px;transform:scaleX(0.8850);">Top</div>
<div class="num" style="left:362px;top:196px;width:55px;height:18px"></div>
<div class="t" style="left:364px;top:198px;font-size:12px;font-weight:400;color:#000;line-height:14px;transform:scaleX(0.8850);">3</div>
<svg style="position:absolute;left:403px;top:198px" width="14" height="16" shape-rendering="crispEdges"><rect x="0" y="0" width="14" height="16" fill="#ececec"/><rect x="1" y="0" width="12" height="7" fill="#f0f0f0"/><rect x="0" y="0" width="1" height="16" fill="#b4b4b4"/><rect x="13" y="0" width="1" height="16" fill="#b4b4b4"/><rect x="0" y="15" width="14" height="1" fill="#b4b4b4"/><rect x="1" y="7" width="12" height="2" fill="#c8c8c8"/><rect x="6" y="2" width="1" height="1" fill="#000"/><rect x="5" y="3" width="3" height="1" fill="#000"/><rect x="4" y="4" width="5" height="1" fill="#000"/><rect x="4" y="10" width="5" height="1" fill="#000"/><rect x="5" y="11" width="3" height="1" fill="#000"/><rect x="6" y="12" width="1" height="1" fill="#000"/></svg>
<div class="t" style="left:423px;top:200px;font-size:12px;font-weight:400;color:#000;line-height:14px;transform:scaleX(0.8500);">mm</div>
<div class="t" style="left:596px;top:170px;font-size:12px;font-weight:400;color:#000;line-height:14px;transform:scaleX(0.8809);">X Dimension (cm)</div>
<div class="num" style="left:785px;top:166px;width:54px;height:18px"></div>
<div class="t" style="left:787px;top:168px;font-size:12px;font-weight:400;color:#000;line-height:14px;transform:scaleX(0.8850);">0.06</div>
<svg style="position:absolute;left:825px;top:168px" width="14" height="16" shape-rendering="crispEdges"><rect x="0" y="0" width="14" height="16" fill="#ececec"/><rect x="1" y="0" width="12" height="7" fill="#f0f0f0"/><rect x="0" y="0" width="1" height="16" fill="#b4b4b4"/><rect x="13" y="0" width="1" height="16" fill="#b4b4b4"/><rect x="0" y="15" width="14" height="1" fill="#b4b4b4"/><rect x="1" y="7" width="12" height="2" fill="#c8c8c8"/><rect x="6" y="2" width="1" height="1" fill="#000"/><rect x="5" y="3" width="3" height="1" fill="#000"/><rect x="4" y="4" width="5" height="1" fill="#000"/><rect x="4" y="10" width="5" height="1" fill="#000"/><rect x="5" y="11" width="3" height="1" fill="#000"/><rect x="6" y="12" width="1" height="1" fill="#000"/></svg>
<div class="t" style="left:596px;top:195px;font-size:12px;font-weight:400;color:#000;line-height:14px;transform:scaleX(0.8917);">Top and Bottom Margin (cm)</div>
<div class="num" style="left:785px;top:191px;width:54px;height:18px"></div>
<div class="t" style="left:787px;top:193px;font-size:12px;font-weight:400;color:#000;line-height:14px;transform:scaleX(0.8850);">0.04</div>
<svg style="position:absolute;left:825px;top:193px" width="14" height="16" shape-rendering="crispEdges"><rect x="0" y="0" width="14" height="16" fill="#ececec"/><rect x="1" y="0" width="12" height="7" fill="#f0f0f0"/><rect x="0" y="0" width="1" height="16" fill="#b4b4b4"/><rect x="13" y="0" width="1" height="16" fill="#b4b4b4"/><rect x="0" y="15" width="14" height="1" fill="#b4b4b4"/><rect x="1" y="7" width="12" height="2" fill="#c8c8c8"/><rect x="6" y="2" width="1" height="1" fill="#000"/><rect x="5" y="3" width="3" height="1" fill="#000"/><rect x="4" y="4" width="5" height="1" fill="#000"/><rect x="4" y="10" width="5" height="1" fill="#000"/><rect x="5" y="11" width="3" height="1" fill="#000"/><rect x="6" y="12" width="1" height="1" fill="#000"/></svg>
<div class="t" style="left:595px;top:220px;font-size:12px;font-weight:400;color:#000;line-height:14px;transform:scaleX(0.8940);">Left and Right Margin (cm)</div>
<div class="num" style="left:785px;top:216px;width:54px;height:18px"></div>
<div class="t" style="left:787px;top:218px;font-size:12px;font-weight:400;color:#000;line-height:14px;transform:scaleX(0.8850);">0.04</div>
<svg style="position:absolute;left:825px;top:218px" width="14" height="16" shape-rendering="crispEdges"><rect x="0" y="0" width="14" height="16" fill="#ececec"/><rect x="1" y="0" width="12" height="7" fill="#f0f0f0"/><rect x="0" y="0" width="1" height="16" fill="#b4b4b4"/><rect x="13" y="0" width="1" height="16" fill="#b4b4b4"/><rect x="0" y="15" width="14" height="1" fill="#b4b4b4"/><rect x="1" y="7" width="12" height="2" fill="#c8c8c8"/><rect x="6" y="2" width="1" height="1" fill="#000"/><rect x="5" y="3" width="3" height="1" fill="#000"/><rect x="4" y="4" width="5" height="1" fill="#000"/><rect x="4" y="10" width="5" height="1" fill="#000"/><rect x="5" y="11" width="3" height="1" fill="#000"/><rect x="6" y="12" width="1" height="1" fill="#000"/></svg>
<div class="t" style="left:595px;top:245px;font-size:12px;font-weight:400;color:#000;line-height:14px;transform:scaleX(0.8919);">Barcode Header Margin (cm)</div>
<div class="num" style="left:785px;top:241px;width:54px;height:18px"></div>
<div class="t" style="left:787px;top:243px;font-size:12px;font-weight:400;color:#000;line-height:14px;transform:scaleX(0.8850);">0.04</div>
<svg style="position:absolute;left:825px;top:243px" width="14" height="16" shape-rendering="crispEdges"><rect x="0" y="0" width="14" height="16" fill="#ececec"/><rect x="1" y="0" width="12" height="7" fill="#f0f0f0"/><rect x="0" y="0" width="1" height="16" fill="#b4b4b4"/><rect x="13" y="0" width="1" height="16" fill="#b4b4b4"/><rect x="0" y="15" width="14" height="1" fill="#b4b4b4"/><rect x="1" y="7" width="12" height="2" fill="#c8c8c8"/><rect x="6" y="2" width="1" height="1" fill="#000"/><rect x="5" y="3" width="3" height="1" fill="#000"/><rect x="4" y="4" width="5" height="1" fill="#000"/><rect x="4" y="10" width="5" height="1" fill="#000"/><rect x="5" y="11" width="3" height="1" fill="#000"/><rect x="6" y="12" width="1" height="1" fill="#000"/></svg>
<div class="t" style="left:595px;top:270px;font-size:12px;font-weight:400;color:#000;line-height:14px;transform:scaleX(0.8864);">Barcode Footer Margin (cm)</div>
<div class="num" style="left:785px;top:266px;width:54px;height:18px"></div>
<div class="t" style="left:787px;top:268px;font-size:12px;font-weight:400;color:#000;line-height:14px;transform:scaleX(0.8850);">0.04</div>
<svg style="position:absolute;left:825px;top:268px" width="14" height="16" shape-rendering="crispEdges"><rect x="0" y="0" width="14" height="16" fill="#ececec"/><rect x="1" y="0" width="12" height="7" fill="#f0f0f0"/><rect x="0" y="0" width="1" height="16" fill="#b4b4b4"/><rect x="13" y="0" width="1" height="16" fill="#b4b4b4"/><rect x="0" y="15" width="14" height="1" fill="#b4b4b4"/><rect x="1" y="7" width="12" height="2" fill="#c8c8c8"/><rect x="6" y="2" width="1" height="1" fill="#000"/><rect x="5" y="3" width="3" height="1" fill="#000"/><rect x="4" y="4" width="5" height="1" fill="#000"/><rect x="4" y="10" width="5" height="1" fill="#000"/><rect x="5" y="11" width="3" height="1" fill="#000"/><rect x="6" y="12" width="1" height="1" fill="#000"/></svg>
<div style="position:absolute;left:235px;top:393px;width:687px;height:1px;background:#a0a0a0"></div>
<div style="position:absolute;left:554px;top:421px;width:49px;height:49px;background:#fff"></div>
<svg style="position:absolute;left:557px;top:424px" width="42" height="42" shape-rendering="crispEdges"><path fill="#000" d="M0 0h2v2h-2zM2 0h2v2h-2zM4 0h2v2h-2zM6 0h2v2h-2zM8 0h2v2h-2zM10 0h2v2h-2zM12 0h2v2h-2zM16 0h2v2h-2zM20 0h2v2h-2zM22 0h2v2h-2zM28 0h2v2h-2zM30 0h2v2h-2zM32 0h2v2h-2zM34 0h2v2h-2zM36 0h2v2h-2zM38 0h2v2h-2zM40 0h2v2h-2zM0 2h2v2h-2zM12 2h2v2h-2zM16 2h2v2h-2zM22 2h2v2h-2zM24 2h2v2h-2zM28 2h2v2h-2zM40 2h2v2h-2zM0 4h2v2h-2zM4 4h2v2h-2zM6 4h2v2h-2zM8 4h2v2h-2zM12 4h2v2h-2zM16 4h2v2h-2zM18 4h2v2h-2zM20 4h2v2h-2zM22 4h2v2h-2zM24 4h2v2h-2zM28 4h2v2h-2zM32 4h2v2h-2zM34 4h2v2h-2zM36 4h2v2h-2zM40 4h2v2h-2zM0 6h2v2h-2zM4 6h2v2h-2zM6 6h2v2h-2zM8 6h2v2h-2zM12 6h2v2h-2zM18 6h2v2h-2zM20 6h2v2h-2zM24 6h2v2h-2zM28 6h2v2h-2zM32 6h2v2h-2zM34 6h2v2h-2zM36 6h2v2h-2zM40 6h2v2h-2zM0 8h2v2h-2zM4 8h2v2h-2zM6 8h2v2h-2zM8 8h2v2h-2zM12 8h2v2h-2zM16 8h2v2h-2zM18 8h2v2h-2zM20 8h2v2h-2zM24 8h2v2h-2zM28 8h2v2h-2zM32 8h2v2h-2zM34 8h2v2h-2zM36 8h2v2h-2zM40 8h2v2h-2zM0 10h2v2h-2zM12 10h2v2h-2zM18 10h2v2h-2zM20 10h2v2h-2zM22 10h2v2h-2zM24 10h2v2h-2zM28 10h2v2h-2zM40 10h2v2h-2zM0 12h2v2h-2zM2 12h2v2h-2zM4 12h2v2h-2zM6 12h2v2h-2zM8 12h2v2h-2zM10 12h2v2h-2zM12 12h2v2h-2zM16 12h2v2h-2zM20 12h2v2h-2zM24 12h2v2h-2zM28 12h2v2h-2zM30 12h2v2h-2zM32 12h2v2h-2zM34 12h2v2h-2zM36 12h2v2h-2zM38 12h2v2h-2zM40 12h2v2h-2zM20 14h2v2h-2zM22 14h2v2h-2zM24 14h2v2h-2zM0 16h2v2h-2zM6 16h2v2h-2zM8 16h2v2h-2zM10 16h2v2h-2zM12 16h2v2h-2zM14 16h2v2h-2zM16 16h2v2h-2zM18 16h2v2h-2zM24 16h2v2h-2zM26 16h2v2h-2zM32 16h2v2h-2zM36 16h2v2h-2zM38 16h2v2h-2zM40 16h2v2h-2zM4 18h2v2h-2zM6 18h2v2h-2zM8 18h2v2h-2zM18 18h2v2h-2zM20 18h2v2h-2zM24 18h2v2h-2zM30 18h2v2h-2zM36 18h2v2h-2zM38 18h2v2h-2zM4 20h2v2h-2zM10 20h2v2h-2zM12 20h2v2h-2zM16 20h2v2h-2zM28 20h2v2h-2zM30 20h2v2h-2zM34 20h2v2h-2zM40 20h2v2h-2zM2 22h2v2h-2zM16 22h2v2h-2zM18 22h2v2h-2zM20 22h2v2h-2zM22 22h2v2h-2zM30 22h2v2h-2zM34 22h2v2h-2zM36 22h2v2h-2zM38 22h2v2h-2zM2 24h2v2h-2zM8 24h2v2h-2zM10 24h2v2h-2zM12 24h2v2h-2zM18 24h2v2h-2zM20 24h2v2h-2zM32 24h2v2h-2zM38 24h2v2h-2zM40 24h2v2h-2zM16 26h2v2h-2zM20 26h2v2h-2zM24 26h2v2h-2zM26 26h2v2h-2zM30 26h2v2h-2zM32 26h2v2h-2zM36 26h2v2h-2zM0 28h2v2h-2zM2 28h2v2h-2zM4 28h2v2h-2zM6 28h2v2h-2zM8 28h2v2h-2zM10 28h2v2h-2zM12 28h2v2h-2zM16 28h2v2h-2zM18 28h2v2h-2zM20 28h2v2h-2zM24 28h2v2h-2zM30 28h2v2h-2zM32 28h2v2h-2zM34 28h2v2h-2zM38 28h2v2h-2zM0 30h2v2h-2zM12 30h2v2h-2zM16 30h2v2h-2zM18 30h2v2h-2zM20 30h2v2h-2zM28 30h2v2h-2zM36 30h2v2h-2zM40 30h2v2h-2zM0 32h2v2h-2zM4 32h2v2h-2zM6 32h2v2h-2zM8 32h2v2h-2zM12 32h2v2h-2zM16 32h2v2h-2zM22 32h2v2h-2zM24 32h2v2h-2zM26 32h2v2h-2zM38 32h2v2h-2zM0 34h2v2h-2zM4 34h2v2h-2zM6 34h2v2h-2zM8 34h2v2h-2zM12 34h2v2h-2zM16 34h2v2h-2zM20 34h2v2h-2zM30 34h2v2h-2zM36 34h2v2h-2zM0 36h2v2h-2zM4 36h2v2h-2zM6 36h2v2h-2zM8 36h2v2h-2zM12 36h2v2h-2zM22 36h2v2h-2zM24 36h2v2h-2zM26 36h2v2h-2zM28 36h2v2h-2zM30 36h2v2h-2zM32 36h2v2h-2zM34 36h2v2h-2zM36 36h2v2h-2zM38 36h2v2h-2zM40 36h2v2h-2zM0 38h2v2h-2zM12 38h2v2h-2zM20 38h2v2h-2zM22 38h2v2h-2zM24 38h2v2h-2zM26 38h2v2h-2zM28 38h2v2h-2zM30 38h2v2h-2zM36 38h2v2h-2zM38 38h2v2h-2zM40 38h2v2h-2zM0 40h2v2h-2zM2 40h2v2h-2zM4 40h2v2h-2zM6 40h2v2h-2zM8 40h2v2h-2zM10 40h2v2h-2zM12 40h2v2h-2zM16 40h2v2h-2zM18 40h2v2h-2zM20 40h2v2h-2zM24 40h2v2h-2zM28 40h2v2h-2zM32 40h2v2h-2zM34 40h2v2h-2z"/></svg>
<div style="position:absolute;left:3px;top:498px;width:920px;height:1px;background:#a0a0a0"></div>
<div class="cb" style="left:13px;top:508px"></div>
<div class="t" style="left:32px;top:508px;font-size:12px;font-weight:400;color:#000;line-height:14px;transform:scaleX(0.9225);">Lock object</div>
<div class="cb" style="left:101px;top:508px"></div>
<div class="t" style="left:119px;top:508px;font-size:12px;font-weight:400;color:#000;line-height:14px;transform:scaleX(0.8961);">Do not print this object</div>
<div class="btn" style="left:760px;top:504px;width:71px;height:21px"></div>
<div class="t" style="left:787px;top:509px;font-size:12px;font-weight:400;color:#000;line-height:14px;transform:scaleX(0.9802);">OK</div>
<div class="btn" style="left:841px;top:504px;width:71px;height:21px"></div>
<div class="t" style="left:859px;top:509px;font-size:12px;font-weight:400;color:#000;line-height:14px;transform:scaleX(0.9368);">Cancel</div>
<svg style="position:absolute;left:872px;top:36px" width="40" height="36" viewBox="872 36 40 36">
<defs><linearGradient id="cg" x1="0" y1="0" x2="0" y2="1"><stop offset="0" stop-color="#fff"/><stop offset="0.7" stop-color="#fdfdfd"/><stop offset="1" stop-color="#e8e8e8"/></linearGradient>
<linearGradient id="sg" x1="0" y1="0" x2="1" y2="0"><stop offset="0" stop-color="#3c3c3c"/><stop offset="0.5" stop-color="#8a8a8a"/><stop offset="1" stop-color="#3c3c3c"/></linearGradient>
<linearGradient id="hg" x1="0" y1="0" x2="0" y2="1"><stop offset="0" stop-color="#f6cc98"/><stop offset="1" stop-color="#eab37a"/></linearGradient></defs>
<rect x="876.5" y="44.5" width="30" height="23" rx="2.5" fill="#d8d8d8" transform="translate(0.5,0.8)"/>
<rect x="876.5" y="44" width="30" height="23" rx="2.5" fill="url(#cg)" stroke="#a4a4a4" stroke-width="1"/>
<g fill="#000">
<rect x="880" y="48" width="1" height="15.7"/>
<rect x="882" y="51.4" width="1.6" height="8.3"/>
<rect x="885" y="51" width="1" height="8.7"/>
<rect x="887.2" y="50" width="1.6" height="9.7"/>
<rect x="890" y="50.5" width="1" height="9.2"/>
<rect x="892" y="51" width="1" height="8.7"/>
<rect x="894.2" y="51" width="1.8" height="8.7"/>
<rect x="897" y="51" width="1" height="8.7"/>
<rect x="899.2" y="50.3" width="1.7" height="9.4"/>
<rect x="902" y="51" width="1" height="12.7"/>
</g>
<g fill="#444"><rect x="883" y="61.3" width="1.3" height="2.3"/><rect x="885" y="61.3" width="1.3" height="2.3"/><rect x="887.6" y="61.3" width="1.3" height="2.3"/><rect x="890" y="61.3" width="1.3" height="2.3"/><rect x="892.4" y="61.3" width="1.3" height="2.3"/><rect x="894.8" y="61.3" width="1.3" height="2.3"/><rect x="897.2" y="61.3" width="1.3" height="2.3"/><rect x="899" y="61.3" width="1.1" height="2.3"/></g>
<path d="M890.4 39.4 L900.2 40.3 L900.2 48.3 Q899.2 50.4 897.2 50.2 Q895.5 50.8 894.6 49.6 Q893 50 892 48.8 Q890.2 49.2 889.4 47.8 L884.6 50.2 Q882.2 51.2 882.3 48.4 Z" fill="url(#hg)" stroke="#9c6230" stroke-width="1" stroke-linejoin="round"/>
<path d="M889.4 47.8 L890.8 45.8 M892 48.8 L893.2 46.6 M894.6 49.6 L895.6 47.4" stroke="#c08040" stroke-width="0.8" fill="none"/>
<rect x="900.4" y="40.2" width="2.8" height="8.8" fill="#fbfbfb" stroke="#c4c4c4" stroke-width="0.6"/>
<rect x="903.3" y="39.1" width="4.4" height="10.3" rx="1.2" fill="url(#sg)" stroke="#404040" stroke-width="0.6"/>
</svg>
</body></html>
